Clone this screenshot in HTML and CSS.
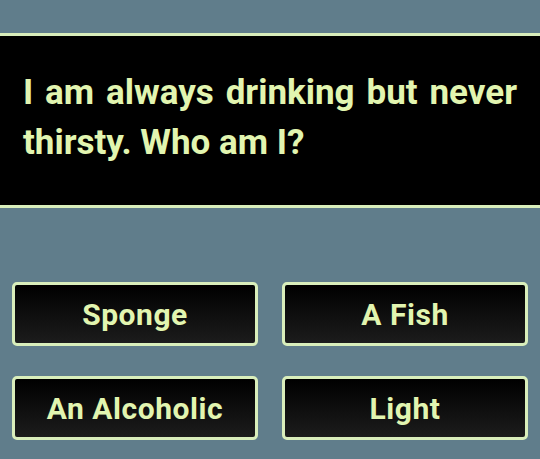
FILE: index.html
```html
<!DOCTYPE html>
<html>
<head>
<meta charset="utf-8">
<link rel="stylesheet" href="styles.css">
</head>
<body>
<div class="question">
  <p class="question-text">I am always drinking but never thirsty. Who am I?</p>
</div>
<div class="answers">
  <button class="answer">Sponge</button>
  <button class="answer">A Fish</button>
  <button class="answer">An Alcoholic</button>
  <button class="answer">Light</button>
</div>
</body>
</html>
```
FILE: styles.css
```css
html, body {
  margin: 0;
  padding: 0;
}
body {
  background: #607d8b;
  width: 540px;
  height: 459px;
  overflow: hidden;
  font-family: Roboto, "Liberation Sans", sans-serif;
}
.question {
  margin-top: 33px;
  background: #000;
  border-top: 3px solid #d9eebb;
  border-bottom: 3px solid #d9eebb;
  padding: 32px 23px 37px 23px;
}
.question-text {
  margin: 0;
  color: #e2f5b0;
  font-weight: 700;
  font-size: 35px;
  line-height: 50px;
  text-align: justify;
}
.answers {
  display: grid;
  grid-template-columns: 246px 246px;
  column-gap: 24px;
  row-gap: 30px;
  padding: 0 12px;
  margin-top: 74px;
}
.answer {
  height: 64px;
  border: 3px solid #d9eebb;
  border-radius: 5px;
  background: linear-gradient(#000, #1c1c1c);
  color: #e2f5b0;
  font-family: Roboto, "Liberation Sans", sans-serif;
  font-weight: 700;
  font-size: 30px;
  letter-spacing: 0.55px;
  padding: 0;
}
```
